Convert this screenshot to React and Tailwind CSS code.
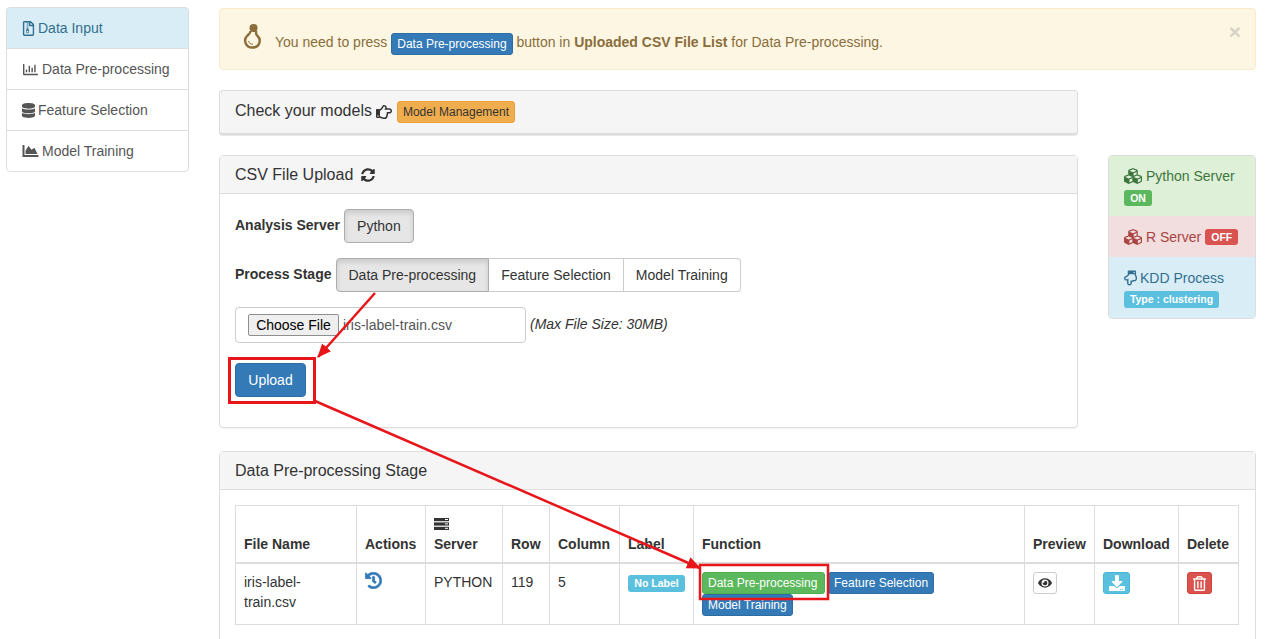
import React from "react";
import {
  FaRegFileArchive, FaRegChartBar, FaDatabase, FaChartArea, FaRegHandPointRight,
  FaSyncAlt, FaCubes, FaRegHandPointDown, FaHistory, FaEye, FaDownload, FaRegTrashAlt,
} from "react-icons/fa";

function NavItem({ icon, label, active }) {
  return (
    <div className={"flex items-center h-[42px] -mt-px first:mt-0 first:rounded-t last:rounded-b border border-[#ddd] px-[15px] gap-[3px] " + (active ? "bg-[#d9edf7] text-[#31708f]" : "bg-white text-[#555]")}>
      {icon}
      <span>{label}</span>
    </div>
  );
}

function Xs({ color, className = "", children }) {
  return (
    <span className={"inline-block align-middle h-[22px] px-[5px] border rounded-[3px] text-[12px] leading-[20px] whitespace-nowrap " + color + " " + className}>
      {children}
    </span>
  );
}

const primary = "bg-[#337ab7] border-[#2e6da4] text-white";
const Th = ({ children, className = "" }) => (
  <th className={"border border-[#ddd] border-b-2 p-2 text-left align-bottom font-bold leading-[20px] " + className}>{children}</th>
);
const Td = ({ children }) => <td className="border border-[#ddd] p-2 align-top leading-[20px]">{children}</td>;

function Bulb() {
  return (
    <svg className="shrink-0 mb-[5px]" width="19" height="25" viewBox="0 0 19 25" fill="none">
      <circle cx="10.5" cy="4" r="4" fill="#8a6d3b" />
      <path d="M7.5 7 C7.5 9.5 6 10 4 12 C0.5 15.5 2 23.5 9.5 23.5 C17 23.5 18.5 15.5 14.5 12 C13 10.5 12.5 9 13.5 7" stroke="#8a6d3b" strokeWidth="2.4" />
      <path d="M5.5 17 C6 19.5 8 20.5 10 20" stroke="#8a6d3b" strokeWidth="1" />
    </svg>
  );
}

function ServerIcon() {
  return (
    <svg className="block mt-[4px] mb-[4px]" width="15" height="12" viewBox="0 0 15 12">
      <rect x="0" y="0" width="15" height="3.2" fill="#333" />
      <rect x="0" y="4.4" width="15" height="3.2" fill="#333" />
      <rect x="0" y="8.8" width="15" height="3.2" fill="#333" />
      <rect x="11" y="1" width="3" height="1" fill="#fff" />
      <rect x="11" y="5.4" width="3" height="1" fill="#fff" />
      <rect x="11" y="9.8" width="3" height="1" fill="#fff" />
    </svg>
  );
}

export default function App() {
  return (
    <div className="relative h-[639px] overflow-hidden bg-white text-[14px] leading-[20px] text-[#333] font-['Liberation_Sans',Arial,sans-serif]">
      <div className="flex pl-[6px]">
        <nav className="w-[183px] mt-[7px] shrink-0 self-start flex flex-col">
          <NavItem active label="Data Input" icon={<FaRegFileArchive className="w-[13px] h-[15px]" />} />
          <NavItem label="Data Pre-processing" icon={<FaRegChartBar className="w-[17px] h-[15px]" />} />
          <NavItem label="Feature Selection" icon={<FaDatabase className="w-[13px] h-[15px]" />} />
          <NavItem label="Model Training" icon={<FaChartArea className="w-[17px] h-[16px]" />} />
        </nav>

        <main className="ml-[30px] w-[1037px] mt-[8px] shrink-0">
          <div className="relative h-[62px] bg-[#fcf6e2] border border-[#faebcc] rounded text-[#8a6d3b] flex items-center pl-[23px]">
            <Bulb />
            <span className="ml-[13px] mt-[9px]">
              You need to press <Xs color={primary}>Data Pre-processing</Xs> button in <b>Uploaded CSV File List</b> for Data Pre-processing.
            </span>
            <span className="absolute right-[14px] top-[11px] text-[21px] font-bold leading-[24px] text-[#d8d2c2]">×</span>
          </div>

          <div className="flex mt-[20px]">
            <div className="w-[859px] shrink-0">
              <section className="h-[45px] rounded border border-[#ddd] bg-[#f5f5f5] shadow-[0_1px_1px_rgba(0,0,0,0.1)] flex items-center px-[15px] text-[16px] border-b-2">
                <span className="mb-[2px]">Check your models</span>
                <FaRegHandPointRight className="ml-[4px] text-[16px]" />
                <span className="ml-[5px] inline-block h-[22px] px-[5px] border border-[#eea236] bg-[#f0ad4e] rounded-[3px] text-[12px] leading-[20px]">Model Management</span>
              </section>

              <section className="mt-[20px] h-[273px] rounded border border-[#ddd] shadow-[0_1px_1px_rgba(0,0,0,0.05)]">
                <div className="h-[38px] bg-[#f5f5f5] border-b border-[#ddd] flex items-center px-[15px] text-[16px]">
                  CSV File Upload
                  <FaSyncAlt className="ml-[8px] text-[14px]" />
                </div>
                <div className="px-[15px] pt-[15px]">
                  <div className="flex items-center h-[34px]">
                    <b className="mb-[2px]">Analysis Server</b>
                    <span className="ml-[4px] h-[34px] px-[12px] border border-[#adadad] bg-[#e6e6e6] rounded flex items-center shadow-[inset_0_3px_5px_rgba(0,0,0,0.125)]">Python</span>
                  </div>
                  <div className="flex items-center h-[34px] mt-[15px]">
                    <b className="mb-[2px]">Process Stage</b>
                    <div className="ml-[4px] flex h-[34px]">
                      <span className="px-[12px] border border-[#adadad] bg-[#e6e6e6] rounded-l flex items-center shadow-[inset_0_3px_5px_rgba(0,0,0,0.125)]">Data Pre-processing</span>
                      <span className="px-[12px] border border-l-0 border-[#ccc] flex items-center">Feature Selection</span>
                      <span className="px-[12px] border border-l-0 border-[#ccc] rounded-r flex items-center">Model Training</span>
                    </div>
                  </div>
                  <div className="flex items-center mt-[15px]">
                    <div className="w-[291px] h-[36px] border border-[#ccc] rounded flex items-center pl-[12px] text-[#555]">
                      <span className="w-[91px] h-[22px] flex items-center justify-center border border-[#8f8f8f] rounded-[2px] bg-[#efefef] text-black">Choose File</span>
                      <span className="ml-[4px]">iris-label-train.csv</span>
                    </div>
                    <i className="ml-[4px] mb-[2px]">(Max File Size: 30MB)</i>
                  </div>
                  <div className="mt-[20px] w-[71px] h-[34px] rounded border border-[#2e6da4] bg-[#337ab7] text-white flex items-center justify-center">Upload</div>
                </div>
              </section>
            </div>

            <aside className="ml-[30px] w-[148px] shrink-0 mt-[65px] self-start border border-[#ddd] rounded">
              <div className="h-[60px] bg-[#dff0d8] text-[#3c763d] pl-[15px] pt-[10px]">
                <div className="flex items-center gap-[4px]"><FaCubes className="text-[18px]" />Python Server</div>
                <span className="block w-[28px] h-[16px] mt-[4px] rounded-[3px] bg-[#5cb85c] text-white text-[10.5px] font-bold leading-[16px] text-center">ON</span>
              </div>
              <div className="h-[41px] bg-[#f2dede] text-[#a94442] pl-[15px] flex items-center gap-[4px]">
                <FaCubes className="text-[18px]" />R Server
                <span className="w-[33px] h-[16px] rounded-[3px] bg-[#d9534f] text-white text-[10.5px] font-bold leading-[16px] text-center">OFF</span>
              </div>
              <div className="h-[61px] bg-[#d9edf7] text-[#31708f] pl-[15px] pt-[11px]">
                <div className="flex items-center gap-[3px]"><FaRegHandPointDown className="w-[13px] h-[16px]" />KDD Process</div>
                <span className="block w-[95px] h-[17px] mt-[3px] rounded-[3px] bg-[#5bc0de] text-white text-[10.5px] font-bold leading-[17px] text-center">Type : clustering</span>
              </div>
            </aside>
          </div>

          <section className="mt-[23px] rounded border border-[#ddd] h-[260px]">
            <div className="h-[38px] bg-[#f5f5f5] border-b border-[#ddd] flex items-center px-[15px] text-[16px]">Data Pre-processing Stage</div>
            <div className="px-[15px] pt-[15px]">
              <table className="table-fixed w-[1003px] border-collapse">
                <colgroup>
                  <col className="w-[121px]" /><col className="w-[69px]" /><col className="w-[77px]" /><col className="w-[47px]" />
                  <col className="w-[70px]" /><col className="w-[74px]" /><col className="w-[331px]" /><col className="w-[70px]" />
                  <col className="w-[84px]" /><col className="w-[60px]" />
                </colgroup>
                <thead>
                  <tr>
                    <Th>File Name</Th>
                    <Th>Actions</Th>
                    <Th><ServerIcon />Server</Th>
                    <Th>Row</Th>
                    <Th>Column</Th>
                    <Th>Label</Th>
                    <Th>Function</Th>
                    <Th>Preview</Th>
                    <Th>Download</Th>
                    <Th>Delete</Th>
                  </tr>
                </thead>
                <tbody>
                  <tr>
                    <Td>iris-label-train.csv</Td>
                    <Td><FaHistory className="text-[17px] text-[#337ab7] stroke-[20px]" /></Td>
                    <Td>PYTHON</Td>
                    <Td>119</Td>
                    <Td>5</Td>
                    <Td><span className="block w-[57px] h-[17px] mt-[3px] rounded-[3px] bg-[#5bc0de] text-white text-[10.5px] font-bold leading-[17px] text-center">No Label</span></Td>
                    <Td>
                      <div className="flex flex-wrap gap-x-[3px]">
                        <Xs color="bg-[#5cb85c] border-[#4cae4c] text-white" className="w-[123px]">Data Pre-processing</Xs>
                        <Xs color={primary} className="w-[106px]">Feature Selection</Xs>
                        <Xs color={primary}>Model Training</Xs>
                      </div>
                    </Td>
                    <Td><span className="w-[24px] h-[22px] border border-[#ccc] rounded-[3px] flex items-center justify-center"><FaEye className="text-[14px]" /></span></Td>
                    <Td><span className="w-[27px] h-[22px] border border-[#46b8da] bg-[#5bc0de] rounded-[3px] flex items-center justify-center text-white"><FaDownload className="text-[16px]" /></span></Td>
                    <Td><span className="w-[25px] h-[22px] border border-[#d43f3a] bg-[#d9534f] rounded-[3px] flex items-center justify-center text-white"><FaRegTrashAlt className="text-[15px]" /></span></Td>
                  </tr>
                </tbody>
              </table>
            </div>
          </section>
        </main>
      </div>

      {/* Annotations drawn over the screenshot */}
      <svg className="absolute left-0 top-0 pointer-events-none" width="1265" height="639">
        <defs>
          <marker id="arrowhead" markerUnits="userSpaceOnUse" markerWidth="14" markerHeight="12" refX="13" refY="6" orient="auto">
            <path d="M0 0 L14 6 L0 12 Z" fill="#e8161b" />
          </marker>
        </defs>
        <line x1="375" y1="293" x2="318" y2="357" stroke="#e8161b" strokeWidth="2.5" markerEnd="url(#arrowhead)" />
        <line x1="315" y1="401" x2="700" y2="568" stroke="#e8161b" strokeWidth="2.5" markerEnd="url(#arrowhead)" />
        <rect x="229.5" y="358.5" width="85" height="44" fill="none" stroke="#e8161b" strokeWidth="3" />
        <rect x="700" y="565" width="128" height="34" fill="none" stroke="#e8161b" strokeWidth="2.5" />
      </svg>
    </div>
  );
}
